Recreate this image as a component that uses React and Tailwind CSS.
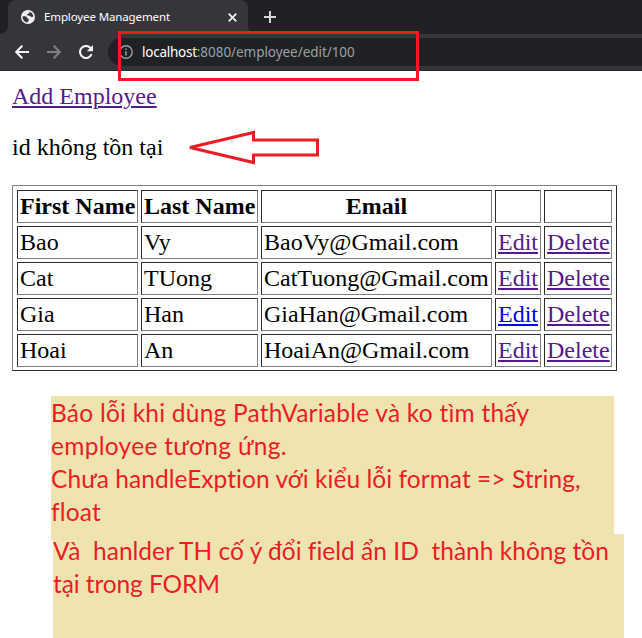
const employees = [
  { first: 'Bao', last: 'Vy', email: 'BaoVy@Gmail.com' },
  { first: 'Cat', last: 'TUong', email: 'CatTuong@Gmail.com' },
  { first: 'Gia', last: 'Han', email: 'GiaHan@Gmail.com', unvisited: true },
  { first: 'Hoai', last: 'An', email: 'HoaiAn@Gmail.com' },
];

const link = 'underline decoration-2 underline-offset-2 [text-decoration-skip-ink:auto]';

function Cell({ children, className = '' }) {
  return (
    <div className={`h-[33px] whitespace-nowrap border border-t-[#2c2c2c] border-l-[#2c2c2c] border-r-[#808080] border-b-[#808080] px-0.5 pt-0.5 leading-[27px] ${className}`}>
      {children}
    </div>
  );
}

function TabStrip() {
  return (
    <div className="flex h-[34px] bg-[#202124] pl-2">
      <div className="relative flex h-full w-60 items-center rounded-t-lg bg-[#35363a] pl-[13px]">
        <svg className="absolute bottom-0 -left-2" width="8" height="8" viewBox="0 0 8 8">
          <path d="M8 0V8H0A8 8 0 0 0 8 0Z" fill="#35363a" />
        </svg>
        <svg className="absolute bottom-0 -right-2" width="8" height="8" viewBox="0 0 8 8">
          <path d="M0 0V8H8A8 8 0 0 1 0 0Z" fill="#35363a" />
        </svg>
        <svg width="14" height="14" viewBox="0 0 14 14">
          <circle cx="7" cy="7" r="7" fill="#f1f3f4" />
          <path d="M1.6 6.2C3.4 6 5.9 6.3 6.1 7.7C6.3 9 8.1 8.5 7.8 10.2C7.6 11.5 6.4 11.6 6.2 12.5C3.6 12 1.4 9.8 1.6 6.2Z" fill="#35363a" />
          <path d="M8.6 1.8C10.4 2.3 12.3 4.3 12.4 6.6C11.3 7.2 9.9 7.1 9.3 6.3C8.8 5.5 7.2 6 6.4 5.3C5.7 4.6 6.2 3.8 7.3 3.7C8.2 3.6 8.3 2.7 8.6 1.8Z" fill="#35363a" />
        </svg>
        <span className="ml-[9px] w-[184px] whitespace-nowrap text-[11.5px] leading-4 tracking-[-0.12px] text-white">Employee Management</span>
        <svg width="9" height="9" viewBox="0 0 9 9" stroke="#f1f3f4" strokeWidth="1.7">
          <path d="M0.7 0.7L8.3 8.3M8.3 0.7L0.7 8.3" />
        </svg>
      </div>
      <svg className="mt-[11px] ml-4" width="12" height="12" viewBox="0 0 12 12" stroke="#d6d7d9" strokeWidth="2">
        <path d="M6 0V12M0 6H12" />
      </svg>
    </div>
  );
}

function Toolbar() {
  return (
    <div className="flex h-[37px] border-b border-[#28292c] bg-[#35363a] pt-1 pl-[15px]">
      <div className="flex h-7 w-[93px] items-center">
        <svg width="14" height="14" viewBox="0 0 14 14" fill="none" stroke="#f1f3f4" strokeWidth="2">
          <path d="M14 7H1.5M7.3 0.7L1.2 7L7.3 13.3" />
        </svg>
        <svg className="ml-[18px]" width="14" height="14" viewBox="0 0 14 14" fill="none" stroke="#808184" strokeWidth="2">
          <path d="M0 7H12.5M6.7 0.7L12.8 7L6.7 13.3" />
        </svg>
        <svg className="ml-[18px]" width="14" height="14" viewBox="0 0 14 14" fill="none">
          <path d="M12.6 9.2A6 6 0 1 1 11.6 3.1" stroke="#f1f3f4" strokeWidth="2.1" />
          <path d="M14 0V6.2H7.8Z" fill="#f1f3f4" />
        </svg>
      </div>
      <div className="flex h-7 flex-1 items-center rounded-l-full bg-[#202124] pl-[11px]">
        <svg width="14" height="14" viewBox="0 0 14 14" fill="none">
          <circle cx="7" cy="7" r="6.2" stroke="#9aa0a6" strokeWidth="1.4" />
          <path d="M7 6.2V10.4M7 3.5V5" stroke="#9aa0a6" strokeWidth="1.5" />
        </svg>
        <span className="ml-[9px] whitespace-nowrap text-[13.5px] leading-5 tracking-[-0.05px] text-[#9aa0a6]">
          <span className="tracking-[-0.25px] text-white">localhost</span>:8080/employee/edit/100
        </span>
      </div>
    </div>
  );
}

function Note({ lines, className }) {
  return (
    <div className={`bg-[#efe4b0] font-['Lato',sans-serif] text-[24.5px] leading-[33px] text-[#ed1c24] [font-variant-ligatures:none] ${className}`}>
      {lines.map((l) => (
        <div key={l.text} className={`whitespace-pre ${l.fit}`}>{l.text}</div>
      ))}
    </div>
  );
}

export default function App() {
  return (
    <div className="relative h-[638px] w-[642px] overflow-hidden bg-white">
      <header className="font-['Noto_Sans',sans-serif]">
        <TabStrip />
        <Toolbar />
      </header>
      <main className="pt-3 pl-3 font-['Liberation_Serif',serif] text-[24px] leading-[27px] text-black">
        <div><a className={`${link} text-[#551a8b]`}>Add Employee</a></div>
        <div className="mt-6 flex items-center">
          <p className="w-[177px]">id không tồn tại</p>
          <svg className="-my-3" width="131" height="36" viewBox="0 0.5 131 36" fill="none" stroke="#ed1c24" strokeWidth="3" strokeMiterlimit="3">
            <path d="M1 18L64.5 3V10.5H128.5V25.5H64.5V33Z" />
          </svg>
        </div>
        <div className="mt-6 grid h-[186px] w-[605px] grid-cols-[121px_117px_231px_46px_68px] content-start gap-[3px] border border-t-[#808080] border-l-[#808080] border-r-[#2c2c2c] border-b-[#2c2c2c] p-1">
          <Cell className="text-center font-bold">First Name</Cell>
          <Cell className="text-center font-bold">Last Name</Cell>
          <Cell className="text-center font-bold">Email</Cell>
          <Cell />
          <Cell />
          {employees.map((e) => (
            <div key={e.email} className="contents">
              <Cell>{e.first}</Cell>
              <Cell>{e.last}</Cell>
              <Cell>{e.email}</Cell>
              <Cell><a className={`${link} ${e.unvisited ? 'text-[#0000ee]' : 'text-[#551a8b]'}`}>Edit</a></Cell>
              <Cell><a className={`${link} text-[#551a8b]`}>Delete</a></Cell>
            </div>
          ))}
        </div>
      </main>
      <section className="mt-[25px]">
        <Note
          className="ml-[51px] h-36 w-[563px]"
          lines={[
            { text: 'Báo lỗi khi dùng PathVariable và ko tìm thấy', fit: 'tracking-[0.23px]' },
            { text: 'employee tương ứng.', fit: 'tracking-[0.3px]' },
            { text: 'Chưa handleExption với kiểu lỗi format => String,', fit: 'tracking-[0.05px]' },
            { text: 'float', fit: 'tracking-[0.2px]' },
          ]}
        />
        <Note
          className="-mt-1.5 ml-[53px] h-[104px] w-[571px]"
          lines={[
            { text: 'Và  hanlder TH cố ý đổi field ẩn ID  thành không tồn', fit: 'tracking-[0.02px]' },
            { text: 'tại trong FORM', fit: 'tracking-[-0.1px]' },
          ]}
        />
      </section>
      <div className="absolute top-[31px] left-[118px] h-[50px] w-[301px] border-3 border-[#ed1c24]" />
    </div>
  );
}
